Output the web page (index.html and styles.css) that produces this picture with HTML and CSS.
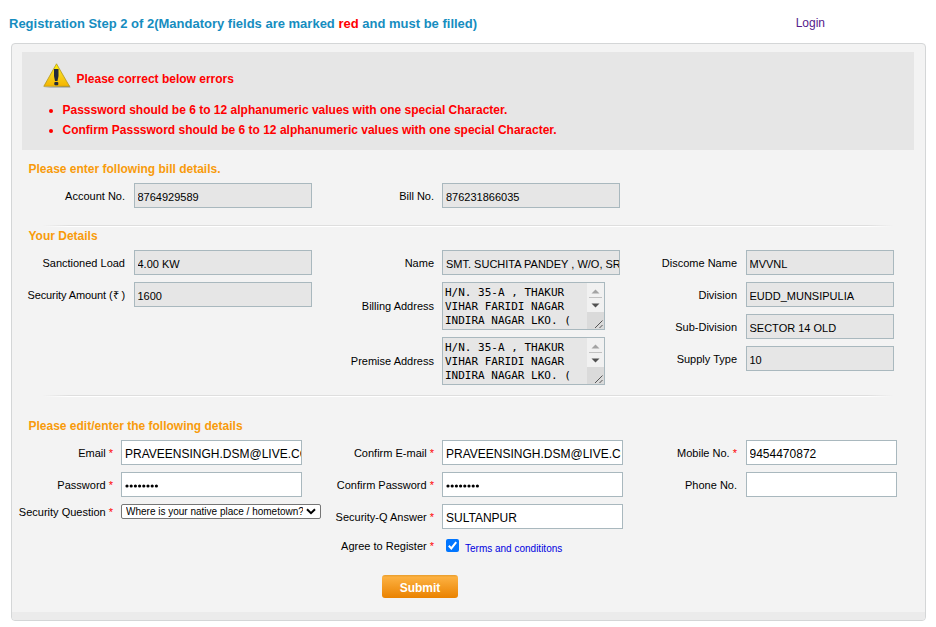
FILE: index.html
```html
<!DOCTYPE html>
<html lang="en">
<head>
<meta charset="utf-8">
<title>Registration Step 2 of 2</title>
<link rel="stylesheet" href="styles.css">
</head>
<body>
<header class="top">
  <h1>Registration Step 2 of 2(Mandatory fields are marked <span class="red">red</span> and must be filled)</h1>
  <a class="login" href="#">Login</a>
</header>
<form class="panel">
  <section class="errors">
    <div class="errors-head">
      <svg class="warn" viewBox="0 0 28 26" width="28" height="26">
        <defs><linearGradient id="wy" x1="0" y1="0" x2="0" y2="1"><stop offset="0" stop-color="#fff200"/><stop offset=".5" stop-color="#f6d21b"/><stop offset="1" stop-color="#f5b400"/></linearGradient></defs>
        <path d="M.5 24.500h27l-1-2z" fill="#8b8f94"/>
        <path d="M13.500 .8 26.500 23.300H.8z" fill="url(#wy)" stroke="#b39722" stroke-width=".8" stroke-linejoin="round"/>
        <path d="M11 6h4.500v7l-1 5h-2.500L11 13z" fill="#222a3c"/>
        <rect x="11.300" y="19" width="4" height="3.300" rx="1" fill="#222a3c"/>
      </svg>
      <strong>Please correct below errors</strong>
    </div>
    <ul>
      <li>Passsword should be 6 to 12 alphanumeric values with one special Character.</li>
      <li>Confirm Passsword should be 6 to 12 alphanumeric values with one special Character.</li>
    </ul>
  </section>

  <section class="bill">
    <h2>Please enter following bill details.</h2>
    <div class="cols">
      <div class="col c1"><div class="row"><label>Account No.</label><input class="ro" readonly value="8764929589"></div></div>
      <div class="col c2"><div class="row"><label>Bill No.</label><input class="ro" readonly value="876231866035"></div></div>
    </div>
  </section>
  <div class="rule"></div>

  <section class="details">
    <h2>Your Details</h2>
    <div class="cols">
      <div class="col c1">
        <div class="row"><label>Sanctioned Load</label><input class="ro" readonly value="4.00 KW"></div>
        <div class="row"><label class="amount">Security Amount (<span class="rupee">₹</span> )</label><input class="ro" readonly value="1600"></div>
      </div>
      <div class="col c2">
        <div class="row"><label>Name</label><input class="ro" readonly value="SMT. SUCHITA PANDEY , W/O, SRI"></div>
        <div class="row tall"><label>Billing Address</label>
          <div class="area"><div class="area-text">H/N. 35-A , THAKUR<br>VIHAR FARIDI NAGAR<br>INDIRA NAGAR LKO. (</div>
            <svg class="bar" viewBox="0 0 17 46" width="17" height="46"><path d="M0 0h17v29H0z" fill="#f1f1f1"/><path d="M0 29h17v17H0z" fill="#dadada"/><path d="M4.500 10.500h8l-4-4z" fill="#a3a3a3"/><path d="M2 14h13v1H2z" fill="#c1c1c1"/><path d="M4.500 20.500h8l-4 4z" fill="#505050"/><path d="M8 45l7.500-7.500M12.500 45l3-3" stroke="#555"/></svg></div></div>
        <div class="row tall"><label>Premise Address</label>
          <div class="area"><div class="area-text">H/N. 35-A , THAKUR<br>VIHAR FARIDI NAGAR<br>INDIRA NAGAR LKO. (</div>
            <svg class="bar" viewBox="0 0 17 46" width="17" height="46"><path d="M0 0h17v29H0z" fill="#f1f1f1"/><path d="M0 29h17v17H0z" fill="#dadada"/><path d="M4.500 10.500h8l-4-4z" fill="#a3a3a3"/><path d="M2 14h13v1H2z" fill="#c1c1c1"/><path d="M4.500 20.500h8l-4 4z" fill="#505050"/><path d="M8 45l7.500-7.500M12.500 45l3-3" stroke="#555"/></svg></div></div>
      </div>
      <div class="col c3">
        <div class="row"><label>Discome Name</label><input class="ro" readonly value="MVVNL"></div>
        <div class="row"><label>Division</label><input class="ro" readonly value="EUDD_MUNSIPULIA"></div>
        <div class="row"><label>Sub-Division</label><input class="ro" readonly value="SECTOR 14 OLD"></div>
        <div class="row"><label>Supply Type</label><input class="ro" readonly value="10"></div>
      </div>
    </div>
  </section>
  <div class="rule"></div>

  <section class="edit">
    <h2>Please edit/enter the following details</h2>
    <div class="cols">
      <div class="col c1">
        <div class="row"><label>Email <i>*</i></label><input value="PRAVEENSINGH.DSM@LIVE.COM"></div>
        <div class="row"><label>Password <i>*</i></label><div class="pw"><svg viewBox="0 0 34 4" width="34" height="4"><path d="M2 2h30" class="dots"/></svg></div></div>
        <div class="row"><label>Security Question <i>*</i></label>
          <div class="select"><span>Where is your native place / hometown?</span><svg viewBox="0 0 10 7" width="10" height="7"><path d="M1 1.200l4 4 4-4" fill="none" stroke="#000" stroke-width="2"/></svg></div></div>
      </div>
      <div class="col c2">
        <div class="row"><label>Confirm E-mail <i>*</i></label><input value="PRAVEENSINGH.DSM@LIVE.COM"></div>
        <div class="row"><label>Confirm Password <i>*</i></label><div class="pw"><svg viewBox="0 0 34 4" width="34" height="4"><path d="M2 2h30" class="dots"/></svg></div></div>
        <div class="row"><label>Security-Q Answer <i>*</i></label><input value="SULTANPUR"></div>
        <div class="row agree"><label>Agree to Register <i>*</i></label>
          <svg class="check" viewBox="0 0 13 13" width="13" height="13"><rect width="13" height="13" rx="2" fill="#0075ff"/><path d="M2.800 6.800l2.500 2.600 4.900-6.300" fill="none" stroke="#fff" stroke-width="2"/></svg>
          <a class="terms" href="#">Terms and condititons</a></div>
      </div>
      <div class="col c3">
        <div class="row"><label>Mobile No. <i>*</i></label><input value="9454470872"></div>
        <div class="row"><label>Phone No.</label><input value=""></div>
      </div>
    </div>
    <button class="submit" type="button">Submit</button>
  </section>
  <div class="foot"></div>
</form>
</body>
</html>
```
FILE: styles.css
```css
* { box-sizing: border-box; }
body {
  margin: 0;
  height: 627px;
  overflow: hidden;
  background: #fff;
  color: #000;
  font: 11px/14px Arial, "Liberation Sans", sans-serif;
}
h1, h2, ul { margin: 0; padding: 0; }
.top {
  display: flex;
  justify-content: space-between;
  height: 43px;
  padding: 15px 111px 0 9px;
}
h1 { font-size: 13px; line-height: 17px; color: #168dc0; white-space: nowrap; }
.red { color: #f00; }
.login { font-size: 12px; line-height: 16px; color: #551a8b; text-decoration: none; }
.panel {
  display: flex;
  flex-direction: column;
  width: 915px;
  height: 578px;
  margin-left: 11px;
  padding-top: 8px;
  border: 1px solid #d4d6d7;
  border-radius: 4px;
  background: #f3f3f3;
  overflow: hidden;
}
.errors {
  width: 892px;
  height: 98px;
  margin-left: 10px;
  background: #e6e6e6;
  color: #f00;
  font-size: 12px;
  font-weight: bold;
  flex: none;
}
.errors-head { display: flex; height: 48px; padding: 11px 0 0 21px; }
.errors-head strong { margin-left: 5.500px; line-height: 32px; }
ul { padding-left: 40.500px; line-height: 20px; white-space: nowrap; }
h2 { padding-left: 16.500px; font-size: 12px; line-height: 16px; color: #f89b0b; }
.bill { height: 75px; padding-top: 11px; flex: none; }
.bill .cols { margin-top: 6px; }
.rule {
  width: 850px;
  height: 2px;
  margin-left: 31px;
  flex: none;
  background: linear-gradient(#dedede 50%, #fff 50%);
  -webkit-mask-image: linear-gradient(90deg, transparent, #000 3%, #000 97%, transparent);
  mask-image: linear-gradient(90deg, transparent, #000 3%, #000 97%, transparent);
}
.details { height: 168px; flex: none; }
.details h2 { padding-top: 1px; }
.details .cols { margin-top: 6px; }
.edit { padding-top: 21px; flex: 1; }
.edit .cols { margin-top: 6px; height: 135px; }
.cols { display: grid; grid-template-columns: 310px 318px 285px; align-items: start; }
.col { display: grid; row-gap: 7px; }
.row { display: flex; align-items: center; }
label { text-align: right; white-space: nowrap; padding-top: 1px; flex: none; }
label i { color: #f00; font-style: normal; }
.tall label { padding: 0 0 1px; }
.amount { letter-spacing: -.1px; }
.c1 label { width: 113px; margin-right: 9px; }
.c2 label { width: 112px; margin-right: 8px; }
.c3 label { width: 97px; margin-right: 9px; }
.edit .c1 label { width: 101px; margin-right: 8px; }
input, .pw {
  width: 178px;
  height: 25px;
  margin: 0;
  padding: 3px 0 0 3px;
  border: 1px solid #a9b8be;
  border-radius: 0;
  outline: 0;
  background: #fff;
  color: #000;
  font: 12px Arial, "Liberation Sans", sans-serif;
}
input.ro { background: #e6e6e6; font-size: 11px; }
.c1 input.ro, .c3 input { padding-left: 2.500px; }
.c3 input.ro { width: 148px; }
.edit input, .pw { width: 181px; }
.edit .c2 input { padding-right: 1px; }
.edit .c3 input { width: 151px; }
.pw { display: flex; align-items: center; padding: 2px 0 0 3px; }
.dots { fill: none; stroke: #000; stroke-width: 3.200; stroke-linecap: round; stroke-dasharray: 0 4.200; }
.area {
  display: flex;
  justify-content: space-between;
  width: 163px;
  height: 48px;
  padding-left: 2px;
  border: 1px solid #a9b8be;
  background: #e6e6e6;
}
.area-text { padding-top: 3px; font: 11px/14px "DejaVu Sans Mono", monospace; white-space: nowrap; }
.select {
  display: flex;
  align-items: center;
  width: 200px;
  height: 15px;
  padding: 0 4px;
  border: 1px solid #767676;
  border-radius: 2px;
  background: #fff;
  font-size: 10px;
  line-height: 13px;
}
.select span { width: 177px; overflow: hidden; white-space: nowrap; flex: none; }
.select svg { margin-left: 3px; }
.agree { height: 25px; margin-top: -2px; }
.agree label { padding: 0 0 1px; }
.check { margin-left: 4px; margin-top: -3px; }
.terms { margin: 4px 0 0 6px; font-size: 10px; color: #0000e0; text-decoration: none; white-space: nowrap; }
.submit {
  display: block;
  width: 76px;
  height: 23px;
  margin-left: 370px;
  padding: 2px 0 0;
  border: 0;
  border-radius: 3px;
  background: linear-gradient(#e89d2c, #fcb040 10%, #ea8200);
  color: #fff;
  font: bold 12px Arial, "Liberation Sans", sans-serif;
}
.foot { height: 8px; background: #ebebeb; flex: none; }
```
